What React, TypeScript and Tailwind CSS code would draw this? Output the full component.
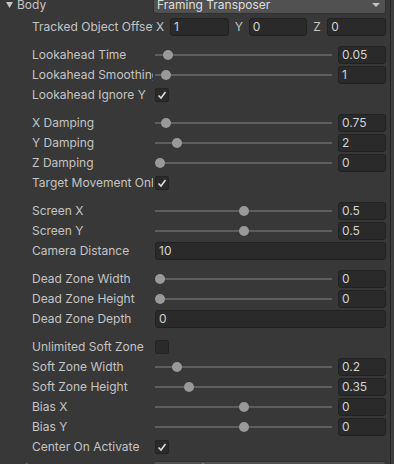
import React from 'react';

type Row =
  | { kind: 'vec3'; label: string; values: string[] }
  | { kind: 'slider'; label: string; value: string; min: number; max: number }
  | { kind: 'check'; label: string; checked: boolean }
  | { kind: 'field'; label: string; value: string }
  | { kind: 'space' };

const rows: Row[] = [
  { kind: 'vec3', label: 'Tracked Object Offset', values: ['1', '0', '0'] },
  { kind: 'space' },
  { kind: 'slider', label: 'Lookahead Time', value: '0.05', min: 0, max: 1 },
  { kind: 'slider', label: 'Lookahead Smoothing', value: '1', min: 0, max: 30 },
  { kind: 'check', label: 'Lookahead Ignore Y', checked: true },
  { kind: 'space' },
  { kind: 'slider', label: 'X Damping', value: '0.75', min: 0, max: 20 },
  { kind: 'slider', label: 'Y Damping', value: '2', min: 0, max: 20 },
  { kind: 'slider', label: 'Z Damping', value: '0', min: 0, max: 20 },
  { kind: 'check', label: 'Target Movement Only', checked: true },
  { kind: 'space' },
  { kind: 'slider', label: 'Screen X', value: '0.5', min: -0.5, max: 1.5 },
  { kind: 'slider', label: 'Screen Y', value: '0.5', min: -0.5, max: 1.5 },
  { kind: 'field', label: 'Camera Distance', value: '10' },
  { kind: 'space' },
  { kind: 'slider', label: 'Dead Zone Width', value: '0', min: 0, max: 2 },
  { kind: 'slider', label: 'Dead Zone Height', value: '0', min: 0, max: 2 },
  { kind: 'field', label: 'Dead Zone Depth', value: '0' },
  { kind: 'space' },
  { kind: 'check', label: 'Unlimited Soft Zone', checked: false },
  { kind: 'slider', label: 'Soft Zone Width', value: '0.2', min: 0, max: 2 },
  { kind: 'slider', label: 'Soft Zone Height', value: '0.35', min: 0, max: 2 },
  { kind: 'slider', label: 'Bias X', value: '0', min: -0.5, max: 0.5 },
  { kind: 'slider', label: 'Bias Y', value: '0', min: -0.5, max: 0.5 },
  { kind: 'check', label: 'Center On Activate', checked: true },
];

const Field = ({ value, className = '' }: { value: string; className?: string }) => (
  <div className={`h-[18px] flex items-center rounded-[3px] border border-[#212121] bg-[#2a2a2a] pl-[3px] text-[#d2d2d2] ${className}`}>
    {value}
  </div>
);

const Label = ({ text }: { text: string }) => (
  <div className="w-[153px] shrink-0 overflow-hidden whitespace-nowrap pl-[32px] text-[#c4c4c4]">{text}</div>
);

const Foldout = ({ label, value, className = '' }: { label: string; value: string; className?: string }) => (
  <div className={`flex h-[18px] shrink-0 items-center ${className}`}>
    <div className="flex w-[153px] shrink-0 items-center pl-[6px] text-[#c4c4c4]">
      <svg width="7" height="6" viewBox="0 0 7 6" className="mr-[4px]">
        <path d="M0 0 H7 L3.5 6 Z" fill="#c2c2c2" />
      </svg>
      {label}
    </div>
    <div className="relative flex h-[17px] flex-1 items-center rounded-[3px] border border-[#303030] bg-[#515151] pl-[3px] text-[#dedede]">
      {value}
      <svg width="8" height="4" viewBox="0 0 8 4" className="absolute right-[5px] top-[5px]">
        <path d="M0 0 H8 L4 4 Z" fill="#c4c4c4" />
      </svg>
    </div>
  </div>
);

const InspectorRow = ({ row }: { row: Row }) => {
  if (row.kind === 'space') return <div className="h-[6px] shrink-0" />;

  return (
    <div className="flex h-[18px] shrink-0 items-center">
      <Label text={row.label} />
      <div className="flex flex-1 items-center">
        {row.kind === 'vec3' && (
          <div className="flex flex-1 gap-[3px]">
            {['X', 'Y', 'Z'].map((axis, i) => (
              <div key={axis} className="flex flex-1 items-center">
                <span className="w-[17px] shrink-0 pl-[3px] text-[#c4c4c4]">{axis}</span>
                <Field value={row.values[i]} className="flex-1" />
              </div>
            ))}
          </div>
        )}
        {row.kind === 'slider' && (
          <>
            <div className="relative ml-[2px] h-[18px] flex-1">
              <div className="absolute left-0 right-0 top-[8px] h-[2px] bg-[#5e5e5e]" />
              <div
                className="absolute top-[4px] h-[10px] w-[10px] rounded-full bg-[#999999]"
                style={{ left: ((parseFloat(row.value) - row.min) / (row.max - row.min)) * 167 }}
              />
            </div>
            <Field value={row.value} className="ml-[6px] w-[48px]" />
          </>
        )}
        {row.kind === 'check' && (
          <div className="ml-[2px] h-[14px] w-[14px] rounded-[2px] border border-[#232323] bg-[#2a2a2a]">
            {row.checked && (
              <svg width="12" height="12" viewBox="0 0 12 12">
                <polyline points="2.5,6.5 5,9 9.5,3" fill="none" stroke="#dcdcdc" strokeWidth="1.6" />
              </svg>
            )}
          </div>
        )}
        {row.kind === 'field' && <Field value={row.value} className="ml-[2px] flex-1" />}
      </div>
    </div>
  );
};

export default function App() {
  return (
    <div className="flex h-[464px] w-[394px] overflow-hidden bg-[#383838] text-[12px] font-['Inter',sans-serif]">
      <div className="-mt-[4px] flex flex-1 flex-col gap-[2px] pr-[4px]">
        <Foldout label="Body" value="Framing Transposer" className="mb-[2px]" />
        {rows.map((row, i) => (
          <InspectorRow key={i} row={row} />
        ))}
        <Foldout label="Aim" value="Do nothing" className="mt-[2px]" />
      </div>
      <div className="w-[4px] shrink-0 border-l border-[#242424] bg-[#3e3e3e]" />
    </div>
  );
}
